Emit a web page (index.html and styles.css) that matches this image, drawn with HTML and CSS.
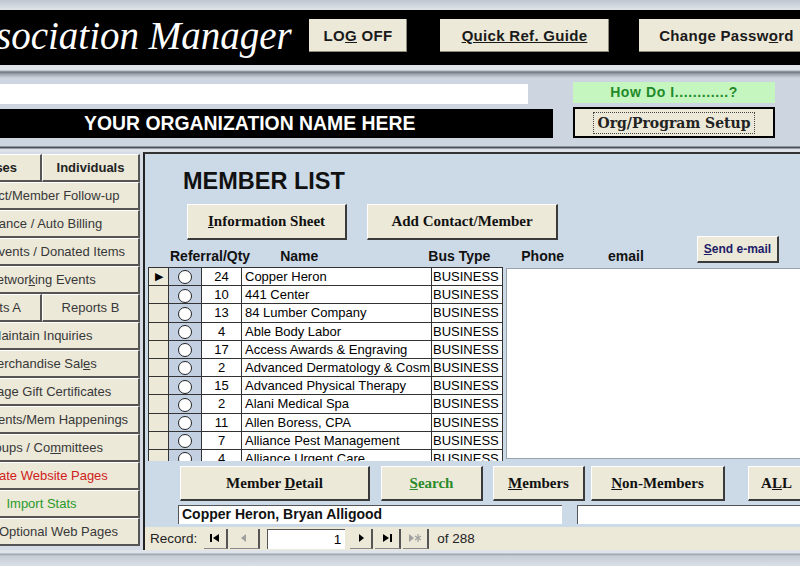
FILE: index.html
```html
<!DOCTYPE html>
<html lang="en">
<head>
    <meta charset="UTF-8">
    <title>Association Manager - Member List</title>
    <link rel="stylesheet" href="styles.css">
</head>
<body>

<div class="app">
    <div class="top-strip"></div>

    <!-- Title bar -->
    <div class="title-bar">
        <div class="app-title">Association Manager</div>
        <div class="btn top-btn logoff"><span>LO<u>G</u> OFF</span></div>
        <div class="btn top-btn quickref"><span><u>Quick Ref. Guide</u></span></div>
        <div class="btn top-btn changepw"><span>Change Passw<u>o</u>rd</span></div>
    </div>

    <div class="sep sep-top"></div>

    <!-- Organization area -->
    <div class="org-area">
        <div class="org-left">
            <div class="org-input"></div>
            <div class="org-name">YOUR ORGANIZATION NAME HERE</div>
        </div>
        <div class="org-right">
            <div class="howdoi">How Do I............?</div>
            <div class="btn setup-btn"><span class="focus">Org/Program Setup</span></div>
        </div>
    </div>

    <div class="sep sep-mid"></div>

    <div class="main">
        <!-- Side menu -->
        <div class="sidebar">
            <div class="side-row split">
                <div class="side-btn bold">Classes</div>
                <div class="side-btn bold">Individuals</div>
            </div>
            <div class="side-btn">Contact/Member Follow-up</div>
            <div class="side-btn">Finance / Auto Billing</div>
            <div class="side-btn shift-a">Events / Donated Items</div>
            <div class="side-btn"><span>Networ<u>k</u>ing Events</span></div>
            <div class="side-row split">
                <div class="side-btn">Reports A</div>
                <div class="side-btn">Reports B</div>
            </div>
            <div class="side-btn">Maintain Inquiries</div>
            <div class="side-btn"><span>Merchandise Sal<u>e</u>s</span></div>
            <div class="side-btn">Manage Gift Certificates</div>
            <div class="side-btn shift-b">Events/Mem Happenings</div>
            <div class="side-btn"><span>Groups / Co<u>m</u>mittees</span></div>
            <div class="side-btn red">Update Website Pages</div>
            <div class="side-btn green">Import Stats</div>
            <div class="side-btn">Extra/Optional Web Pages</div>
        </div>

        <!-- Member list panel -->
        <div class="panel">
            <div class="panel-title">MEMBER LIST</div>

            <div class="action-row">
                <div class="btn serif-btn info-btn"><span><u>I</u>nformation Sheet</span></div>
                <div class="btn serif-btn add-btn">Add Contact/Member</div>
            </div>

            <div class="col-heads">
                <span class="h-ref">Referral/Qty</span>
                <span class="h-name">Name</span>
                <span class="h-bus">Bus Type</span>
                <span class="h-phone">Phone</span>
                <span class="h-email">email</span>
                <div class="btn email-btn"><span><u>S</u>end e-mail</span></div>
            </div>

            <div class="list-area">
                <div class="grid-wrap">
                    <table class="members">
                        <tbody id="member-rows"></tbody>
                    </table>
                </div>
                <div class="detail-box"></div>
            </div>

            <div class="filter-row">
                <div class="btn serif-btn detail-btn"><span>Member <u>D</u>etail</span></div>
                <div class="btn serif-btn search-btn"><span><u>S</u>earch</span></div>
                <div class="btn serif-btn members-btn"><span><u>M</u>embers</span></div>
                <div class="btn serif-btn nonmem-btn"><span><u>N</u>on-Members</span></div>
                <div class="btn serif-btn all-btn"><span>A<u>L</u>L</span></div>
            </div>

            <div class="field-row">
                <div class="field name-field">Copper Heron, Bryan Alligood</div>
                <div class="field second-field"></div>
            </div>

            <div class="record-bar">
                <span class="rec-label">Record:</span>
                <span class="nav-btn first">
                    <svg width="12" height="10" viewBox="0 0 12 10"><rect x="1" y="1" width="2" height="8" fill="#000"/><polygon points="10,1 10,9 4,5" fill="#000"/></svg>
                </span>
                <span class="nav-btn prev">
                    <svg width="12" height="10" viewBox="0 0 12 10"><polygon points="8,1 8,9 3,5" fill="#a0a0a0"/></svg>
                </span>
                <span class="rec-input">1</span>
                <span class="nav-btn next">
                    <svg width="12" height="10" viewBox="0 0 12 10"><polygon points="4,1 4,9 9,5" fill="#000"/></svg>
                </span>
                <span class="nav-btn last">
                    <svg width="12" height="10" viewBox="0 0 12 10"><polygon points="2,1 2,9 8,5" fill="#000"/><rect x="9" y="1" width="2" height="8" fill="#000"/></svg>
                </span>
                <span class="nav-btn new">
                    <svg width="14" height="10" viewBox="0 0 14 10"><polygon points="1,1 1,9 6,5" fill="#a0a0a0"/><path d="M10 1v8M7 3l6 4M13 3l-6 4" stroke="#a0a0a0" stroke-width="1.2"/></svg>
                </span>
                <span class="rec-of">of 288</span>
            </div>
        </div>
    </div>

    <div class="bottom-strip"></div>
</div>

<script>
    const members = [
        [24, "Copper Heron"],
        [10, "441 Center"],
        [13, "84 Lumber Company"],
        [4, "Able Body Labor"],
        [17, "Access Awards & Engraving"],
        [2, "Advanced Dermatology & Cosmetic Surgery"],
        [15, "Advanced Physical Therapy"],
        [2, "Alani Medical Spa"],
        [11, "Allen Boress, CPA"],
        [7, "Alliance Pest Management"],
        [4, "Alliance Urgent Care"]
    ];

    const tbody = document.getElementById("member-rows");
    members.forEach((m, i) => {
        const row = document.createElement("tr");
        row.innerHTML = `
            <td class="sel">${i === 0 ? "&#9654;" : ""}</td>
            <td class="opt"><span class="radio"></span></td>
            <td class="qty">${m[0]}</td>
            <td class="name"><div>${m[1].replace("&", "&amp;")}</div></td>
            <td class="bus">BUSINESS</td>
        `;
        tbody.appendChild(row);
    });
</script>

</body>
</html>
```

FILE: styles.css
```css
body {
    margin: 0;
    padding: 0;
    background-color: #d5dce5;
    font-family: "Liberation Sans", Arial, sans-serif;
}

.app {
    width: 800px;
    height: 566px;
    overflow: hidden;
    display: flex;
    flex-direction: column;
}

.top-strip {
    height: 10px;
    background: linear-gradient(#bfc6d0, #dfe4ea);
}

/* Generic Access-style button */
.btn {
    box-sizing: border-box;
    background-color: #ece9d8;
    border-top: 1px solid #ffffff;
    border-left: 1px solid #ffffff;
    border-right: 2px solid #3a3a3a;
    border-bottom: 2px solid #3a3a3a;
    display: flex;
    align-items: center;
    justify-content: center;
    white-space: nowrap;
    color: #111;
    flex-shrink: 0;
}

/* Title bar */
.title-bar {
    height: 55px;
    background-color: #000;
    display: flex;
    align-items: flex-start;
}

.app-title {
    width: 352px;
    margin-left: -43px;
    flex-shrink: 0;
    font-family: "Liberation Serif", "Times New Roman", serif;
    font-style: italic;
    font-size: 39px;
    line-height: 52px;
    color: #fff;
    white-space: nowrap;
}

.top-btn {
    margin-top: 9px;
    height: 33px;
    font-weight: bold;
    font-size: 15px;
    letter-spacing: 0.3px;
    border: none;
    box-shadow: inset -1px -1px 0 #8d8a7c;
    color: #1a1a1a;
}

.logoff { width: 98px; }
.quickref { width: 169px; margin-left: 33px; }
.changepw { width: 175px; margin-left: 30px; }

.sep {
    flex-shrink: 0;
}

.sep-top {
    height: 13px;
    background: linear-gradient(#dfe4ea 0, #dfe4ea 5px, #6f7680 7px, #9aa1aa 9px, #cdd5e0 13px);
}

.sep-mid {
    height: 12px;
    background: linear-gradient(#cdd5e0 0, #cdd5e0 6px, #4c525a 7px, #4c525a 8px, #dde2e8 9px, #dde2e8 12px);
}

/* Organization area */
.org-area {
    height: 62px;
    background-color: #cdd5e0;
    display: flex;
}

.org-left {
    width: 553px;
    padding-top: 6px;
    display: flex;
    flex-direction: column;
    gap: 5px;
}

.org-input {
    width: 528px;
    height: 20px;
    background-color: #fff;
}

.org-name {
    height: 29px;
    background-color: #000;
    color: #fff;
    font-weight: bold;
    font-size: 19.4px;
    line-height: 28px;
    padding-left: 84px;
    white-space: nowrap;
}

.org-right {
    margin-left: 20px;
    width: 202px;
    padding-top: 4px;
    display: flex;
    flex-direction: column;
    gap: 4px;
}

.howdoi {
    height: 21px;
    background-color: #c6f6c0;
    color: #1f8a2a;
    font-weight: bold;
    font-size: 14px;
    line-height: 21px;
    text-align: center;
    letter-spacing: 0.6px;
}

.setup-btn {
    height: 31px;
    border: 2px solid #000;
    font-family: "DejaVu Serif", "Liberation Serif", serif;
    font-size: 14px;
    font-weight: bold;
    color: #222;
}

.setup-btn .focus {
    border: 1px dotted #444;
    padding: 2px 3px;
}

/* Main area */
.main {
    height: 398px;
    display: flex;
    flex-shrink: 0;
}

.sidebar {
    width: 196px;
    margin-left: -56px;
    margin-top: 2px;
    flex-shrink: 0;
    display: flex;
    flex-direction: column;
}

.side-row {
    display: flex;
}

.side-btn {
    box-sizing: border-box;
    height: 28px;
    background-color: #ece9d8;
    border-top: 1px solid #fff;
    border-left: 1px solid #fff;
    border-right: 2px solid #555;
    border-bottom: 2px solid #555;
    font-size: 13px;
    color: #383838;
    display: flex;
    align-items: center;
    justify-content: center;
    white-space: nowrap;
}

.side-btn.shift-a { padding-left: 32px; }
.side-btn.shift-b { padding-left: 28px; }

.side-row .side-btn {
    flex: 1;
}

.side-btn.bold {
    font-weight: bold;
    color: #222;
}

.side-btn.red { color: #d02020; }
.side-btn.green { color: #2a9a2a; }

.panel {
    flex: 1;
    margin-left: 3px;
    background-color: #ccd9e7;
    border-left: 2px solid #222;
    border-top: 2px solid #333;
    display: flex;
    flex-direction: column;
}

.panel-title {
    margin: 14px 0 0 38px;
    font-size: 23.5px;
    font-weight: bold;
    line-height: 26px;
    color: #111;
}

.action-row {
    display: flex;
    margin: 10px 0 0 42px;
    gap: 20px;
}

.serif-btn {
    font-family: "Liberation Serif", "Times New Roman", serif;
    font-weight: bold;
    font-size: 15px;
}

.info-btn { width: 160px; height: 36px; }
.add-btn { width: 191px; height: 36px; }

/* Column headings */
.col-heads {
    position: relative;
    height: 27px;
    font-weight: bold;
    font-size: 14px;
    color: #111;
    display: flex;
    align-items: flex-end;
}

.col-heads span {
    line-height: 17px;
    padding-bottom: 2px;
}

.h-ref { margin-left: 25px; }
.h-name { margin-left: 30px; }
.h-bus { margin-left: 110px; }
.h-phone { margin-left: 31px; }
.h-email { margin-left: 44px; }

.email-btn {
    position: absolute;
    left: 552px;
    top: -4px;
    width: 82px;
    height: 27px;
    font-size: 12px;
    color: #202068;
}

.col-heads .email-btn span {
    padding: 0;
    line-height: normal;
}

/* Member list */
.list-area {
    display: flex;
    height: 194px;
}

.grid-wrap {
    margin-left: 3px;
    width: 356px;
    height: 194px;
    overflow: hidden;
    flex-shrink: 0;
}

.members {
    border-collapse: collapse;
    table-layout: fixed;
    width: 355px;
    font-size: 13px;
}

.members td {
    height: 17.2px;
    padding: 0;
    border: 1px solid #333;
    background-color: #fff;
    white-space: nowrap;
    overflow: hidden;
}

.members td.sel {
    width: 19px;
    background-color: #ece9d8;
    font-size: 11px;
    text-align: center;
    color: #000;
}

.members td.opt {
    width: 32px;
    background-color: #c3d0e1;
    text-align: center;
}

.radio {
    display: inline-block;
    width: 12px;
    height: 12px;
    border: 1px solid #222;
    border-radius: 50%;
    background-color: #fff;
    vertical-align: middle;
}

.members td.qty {
    width: 39px;
    text-align: center;
}

.members td.name {
    width: 189px;
}

.members td.name div {
    width: 188px;
    overflow: hidden;
    padding-left: 3px;
    box-sizing: border-box;
}

.members td.bus {
    padding-left: 1px;
}

.detail-box {
    flex: 1;
    margin: 1px 0 2px 2px;
    background-color: #fff;
    border: 1px solid #9aa3ad;
    border-right: none;
}

/* Filter buttons */
.filter-row {
    display: flex;
    margin: 5px 0 0 35px;
    height: 35px;
}

.filter-row .btn {
    height: 35px;
}

.detail-btn { width: 190px; }
.search-btn { width: 102px; margin-left: 11px; color: #2a8a2a; }
.members-btn { width: 92px; margin-left: 10px; }
.nonmem-btn { width: 134px; margin-left: 6px; }
.all-btn { width: 58px; margin-left: 23px; }

.field-row {
    display: flex;
    margin: 4px 0 0 33px;
    gap: 15px;
}

.field {
    box-sizing: border-box;
    height: 19px;
    background-color: #fff;
    border-top: 1px solid #555;
    border-left: 1px solid #555;
    font-weight: bold;
    font-size: 14px;
    line-height: 17px;
    padding-left: 3px;
    color: #111;
}

.name-field { width: 384px; }
.second-field { width: 240px; }

/* Record navigator */
.record-bar {
    margin-top: 3px;
    height: 23px;
    background-color: #ece9d8;
    display: flex;
    align-items: center;
    font-size: 13.5px;
    color: #222;
}

.rec-label {
    margin-left: 5px;
    margin-right: 7px;
}

.nav-btn {
    box-sizing: border-box;
    height: 20px;
    margin-right: 2px;
    border-right: 2px solid #555;
    border-bottom: 1px solid #888;
    display: flex;
    align-items: center;
    justify-content: center;
}

.nav-btn.first { width: 24px; }
.nav-btn.prev { width: 30px; }
.nav-btn.next { width: 23px; }
.nav-btn.last { width: 26px; }
.nav-btn.new { width: 26px; }

.rec-input {
    box-sizing: border-box;
    width: 78px;
    height: 20px;
    margin: 0 5px 0 5px;
    background-color: #fff;
    border-top: 1px solid #555;
    border-left: 1px solid #555;
    text-align: right;
    padding-right: 4px;
    line-height: 19px;
    color: #000;
}

.rec-of {
    margin-left: 6px;
}

.bottom-strip {
    flex: 1;
    background: linear-gradient(#dfe4ea 0, #dfe4ea 3px, #9aa1aa 4px, #c6cdd6 6px, #d9dfe6 100%);
}
```
